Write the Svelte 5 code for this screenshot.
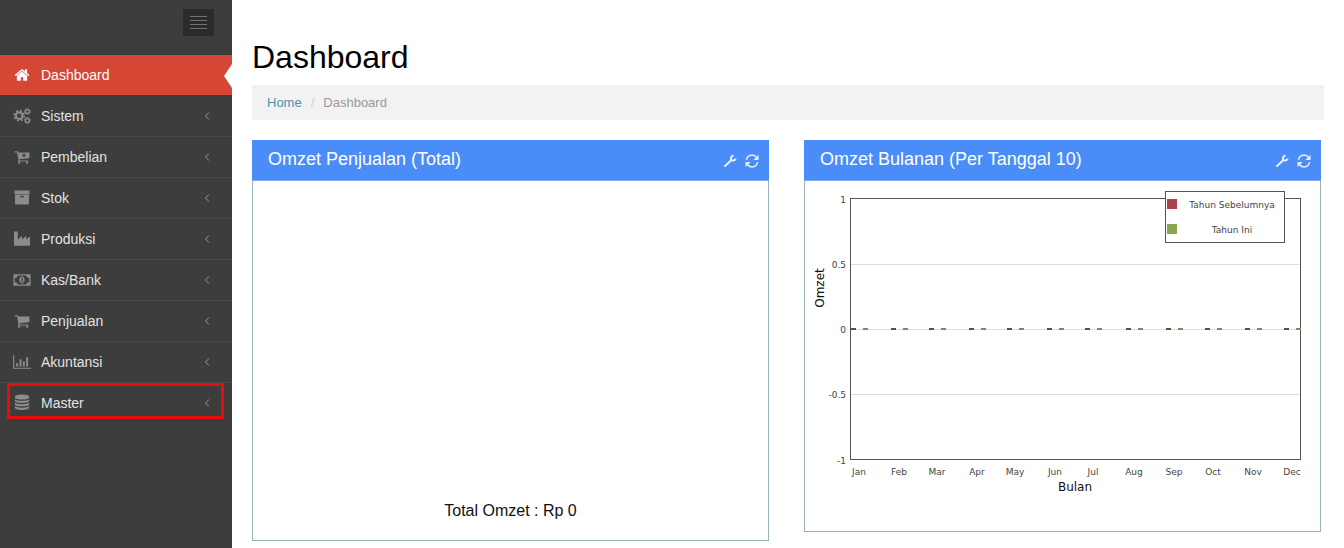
<script lang="ts">
  type MenuItem = { label: string; icon: string; active?: boolean; marked?: boolean };

  const menu: MenuItem[] = [
    { label: 'Dashboard', icon: 'home', active: true },
    { label: 'Sistem', icon: 'cogs' },
    { label: 'Pembelian', icon: 'cart-plus' },
    { label: 'Stok', icon: 'archive' },
    { label: 'Produksi', icon: 'industry' },
    { label: 'Kas/Bank', icon: 'money' },
    { label: 'Penjualan', icon: 'cart' },
    { label: 'Akuntansi', icon: 'chart' },
    { label: 'Master', icon: 'database', marked: true },
  ];

  // x positions follow the first day of each month
  const months = [
    { name: 'Jan', x: 54 },
    { name: 'Feb', x: 94 },
    { name: 'Mar', x: 132 },
    { name: 'Apr', x: 172 },
    { name: 'May', x: 210 },
    { name: 'Jun', x: 250 },
    { name: 'Jul', x: 288 },
    { name: 'Aug', x: 329 },
    { name: 'Sep', x: 369 },
    { name: 'Oct', x: 408 },
    { name: 'Nov', x: 448 },
    { name: 'Dec', x: 487 },
  ];

  const ticks = [
    { label: '1', y: 18 },
    { label: '0.5', y: 83 },
    { label: '0', y: 148 },
    { label: '-0.5', y: 213 },
    { label: '-1', y: 279 },
  ];

  let collapsed = false;
</script>

{#snippet menuIcon(name: string)}
  <svg class="menu-icon" viewBox="0 0 1792 1792" aria-hidden="true">
    {#if name === 'home'}
      <path d="M1472 992v480q0 26-19 45t-45 19h-384v-384h-256v384h-384q-26 0-45-19t-19-45v-480q0-1 .5-3t.5-3l575-474 575 474q1 2 1 6zm223-69l-62 74q-8 9-21 11h-3q-13 0-21-7l-692-577-692 577q-12 8-24 7-13-2-21-11l-62-74q-8-10-7-23.5t11-21.5l719-599q32-26 76-26t76 26l244 204v-195q0-14 9-23t23-9h192q14 0 23 9t9 23v408l219 182q10 8 11 21.5t-7 23.5z" />
    {:else if name === 'cogs'}
      <g fill="none" stroke="currentColor">
        <circle cx="580" cy="860" r="370" stroke-width="240" />
        <circle cx="580" cy="860" r="560" stroke-width="190" stroke-dasharray="220 220" />
        <circle cx="1500" cy="400" r="220" stroke-width="160" />
        <circle cx="1500" cy="400" r="330" stroke-width="110" stroke-dasharray="130 130" />
        <circle cx="1500" cy="1390" r="220" stroke-width="160" />
        <circle cx="1500" cy="1390" r="330" stroke-width="110" stroke-dasharray="130 130" />
      </g>
    {:else if name === 'cart' || name === 'cart-plus'}
      <path d="M704 1536q0 52-38 90t-90 38-90-38-38-90 38-90 90-38 90 38 38 90zm896 0q0 52-38 90t-90 38-90-38-38-90 38-90 90-38 90 38 38 90zm128-1088v512q0 24-16.500 42.500t-40.500 21.500l-1044 122q13 60 13 70 0 16-24 64h920q26 0 45 19t19 45-19 45-45 19h-1024q-26 0-45-19t-19-45q0-11 8-31.500t16-36 21.500-40 15.500-29.500l-177-823h-204q-26 0-45-19t-19-45 19-45 45-19h256q16 0 28.500 6.500t19.500 15.500 13 24.500 8 26 5.500 29.500 4.500 26h1201q26 0 45 19t19 45z" />
      {#if name === 'cart-plus'}
        <path d="M1120 480v440M900 700h440" stroke="#3d3d3d" stroke-width="130" />
      {/if}
    {:else if name === 'archive'}
      <path d="M60 60h1672v440h-1672zM120 550h1552v1080h-1552zM680 680v120h432v-120z" fill-rule="evenodd" />
    {:else if name === 'industry'}
      <path d="M0 1664v-1620h420v900l480-420v420l480-420v420l412-360v1080z" />
    {:else if name === 'money'}
      <path d="M-60 256h1912v1280h-1912zM400 390q0 270-320 270v480q320 0 320 270h992q0-270 320-270v-480q-320 0-320-270z" fill-rule="evenodd" />
      <path d="M896 500c-180 0-290 180-290 396s110 396 290 396 290-180 290-396-110-396-290-396zm-110 220l110-80h80v430h90v90h-290v-90h90v-290l-80 40z" fill-rule="evenodd" />
    {:else if name === 'chart'}
      <path d="M-100 128h128v1408h1900v128h-2028zM250 1000h220v408h-220zM620 600h220v808h-220zM990 800h220v608h-220zM1360 350h220v1058h-220z" />
    {:else if name === 'database'}
      <path d="M896 -60q420 0 640 96t168 160v90q0 90-210 160t-598 70-598-70-210-160v-90q0-90 210-173t598-83z" />
      <path d="M88 470q230 186 808 186t808-186v180q0 100-210 170t-598 70-598-70-210-170zM88 850q230 186 808 186t808-186v180q0 100-210 170t-598 70-598-70-210-170zM88 1230q230 186 808 186t808-186v180q0 110-210 190t-598 80-598-80-210-190z" />
    {/if}
  </svg>
{/snippet}

{#snippet panelTools()}
  <div class="tools">
    <button class="tool" aria-label="Pengaturan">
      <svg viewBox="0 0 14 14">
        <path d="M2 12l6-5.500" stroke-width="2" stroke-linecap="round" />
        <path d="M10.500 1.500C8.500 2 7.500 3.500 8 5.500c.5 1.500 3 1.500 5-.5" stroke-width="2" />
      </svg>
    </button>
    <button class="tool" aria-label="Muat ulang">
      <svg viewBox="0 0 14 14">
        <path d="M1.500 6A5.500 5.500 0 0 1 11.500 3.500M12.500 8A5.500 5.500 0 0 1 2.500 10.500" stroke-width="1.500" />
        <path d="M13.500 1v5h-5zM.5 13V8h5z" class="heads" />
      </svg>
    </button>
  </div>
{/snippet}

<div class="page">
  <aside class="sidebar">
    <div class="sidebar-top">
      <button class="toggler" aria-label="Menu" on:click={() => (collapsed = !collapsed)}>
        <svg width="17" height="14" viewBox="0 0 17 14">
          <path d="M0 .5h17M0 4.500h17M0 8.500h17M0 12.500h17" stroke="#737373" />
        </svg>
      </button>
    </div>
    <nav class:collapsed>
      <ul class="menu">
        {#each menu as item}
          <li class:active={item.active} class:marked={item.marked}>
            <a href="#{item.icon}">
              {@render menuIcon(item.icon)}
              <span class="menu-label">{item.label}</span>
              {#if !item.active}
                <svg class="arrow" width="6" height="8" viewBox="0 0 6 8">
                  <path d="M5 .5L1.500 4 5 7.500" fill="none" stroke="currentColor" />
                </svg>
              {/if}
            </a>
          </li>
        {/each}
      </ul>
    </nav>
  </aside>

  <main class="content">
    <h1>Dashboard</h1>
    <ol class="breadcrumb">
      <li><a href="#home">Home</a></li>
      <li class="sep" aria-hidden="true">/</li>
      <li>Dashboard</li>
    </ol>

    <div class="panels">
      <section class="panel">
        <header>
          <h2>Omzet Penjualan (Total)</h2>
          {@render panelTools()}
        </header>
        <div class="total">Total Omzet : Rp 0</div>
      </section>

      <section class="panel">
        <header>
          <h2>Omzet Bulanan (Per Tanggal 10)</h2>
          {@render panelTools()}
        </header>
        <svg class="chart" viewBox="0 0 515 350" role="img" aria-label="Omzet Bulanan">
          {#each ticks as tick, i}
            {#if i > 0 && i < ticks.length - 1}
              <line x1="46" x2="495" y1={tick.y + 0.5} y2={tick.y + 0.5} stroke="#ddd" />
            {/if}
            <text class="tick" x="41" y={tick.y + 4} text-anchor="end">{tick.label}</text>
          {/each}
          <rect x="45.500" y="17.500" width="450" height="261" fill="none" stroke="#545454" />

          {#each months as month}
            <rect x={month.x - 8} y="147" width="5" height="2" fill="#5c4f48" />
            <rect x={month.x + 4} y="147" width="5" height="2" fill="#7d8764" />
            <text class="tick" x={month.x} y="294" text-anchor="middle">{month.name}</text>
          {/each}

          <text class="axis" x="270" y="310" text-anchor="middle">Bulan</text>
          <text class="axis" transform="translate(19 107) rotate(-90)" text-anchor="middle">Omzet</text>

          <!-- Legend -->
          <rect x="360.500" y="10.500" width="119" height="51" fill="#fff" stroke="#545454" />
          <rect x="362" y="18" width="10" height="10" fill="#a8444b" />
          <rect x="362" y="43" width="10" height="10" fill="#8aa651" />
          <text class="tick" x="427" y="27" text-anchor="middle">Tahun Sebelumnya</text>
          <text class="tick" x="427" y="52" text-anchor="middle">Tahun Ini</text>
        </svg>
      </section>
    </div>
  </main>
</div>

<style>
  :global(body) {
    margin: 0;
    background: #fff;
    font-family: 'Liberation Sans', Arial, sans-serif;
  }
  .page {
    display: flex;
    min-height: 100vh;
  }
  button {
    border: 0;
    padding: 0;
    cursor: pointer;
  }

  /* Sidebar */
  .sidebar {
    width: 232px;
    flex-shrink: 0;
    background: #3d3d3d;
  }
  .sidebar-top {
    display: flex;
    justify-content: flex-end;
    align-items: flex-start;
    height: 46px;
    padding: 9px 18px 0 0;
  }
  .toggler {
    display: flex;
    align-items: center;
    justify-content: center;
    width: 31px;
    height: 27px;
    background: #2b2b2b;
  }
  .collapsed {
    display: none;
  }
  .menu {
    list-style: none;
    margin: 0;
    padding: 0;
  }
  .menu li {
    position: relative;
    border-bottom: 1px solid #494949;
  }
  .menu a {
    display: flex;
    align-items: center;
    height: 40px;
    box-sizing: border-box;
    padding: 0 22px 0 14px;
    color: #e2e2e2;
    font-size: 14px;
    text-decoration: none;
  }
  .menu-icon {
    width: 16px;
    height: 16px;
    margin-right: 11px;
    color: #8c8c8c;
    fill: currentColor;
    overflow: visible;
  }
  .menu-label {
    flex: 1;
  }
  .arrow {
    color: #999;
  }
  .menu .active {
    background: #d64635;
    border-color: #3d3d3d;
    background-clip: padding-box;
  }
  .active a {
    color: #fff;
  }
  .active .menu-icon {
    color: #fff;
  }
  /* notch pointing at the open page */
  .active::after {
    content: '';
    position: absolute;
    top: 9px;
    right: 0;
    border: 12px solid transparent;
    border-left-width: 0;
    border-right: 8px solid #fff;
  }
  .menu .marked {
    border-bottom: 0;
  }
  .marked::after {
    content: '';
    position: absolute;
    inset: 0 8px 4px 7px;
    border: 3px solid #e80c0c;
    pointer-events: none;
  }

  /* Content */
  .content {
    flex: 1;
    min-width: 0;
    padding: 37px 20px 7px;
  }
  h1 {
    margin: 0 0 8px;
    font-size: 32px;
    font-weight: 400;
    line-height: 40px;
    color: #000;
  }
  .breadcrumb {
    display: flex;
    gap: 9px;
    margin: 0 0 20px;
    padding: 1px 15px 0;
    list-style: none;
    background: #f2f2f2;
    color: #999;
    font-size: 13px;
    line-height: 34px;
  }
  .breadcrumb a {
    color: #4795ab;
    text-decoration: none;
  }
  .sep {
    color: #ccc;
  }
  .panels {
    display: grid;
    grid-template-columns: 1fr 1fr;
    gap: 35px;
    align-items: start;
    margin-right: 3px;
  }
  .panel {
    border: 1px solid #9ab3b8;
    border-top: 0;
  }
  .panel header {
    display: flex;
    justify-content: space-between;
    align-items: center;
    height: 40px;
    margin: 0 -1px;
    padding: 0 10px 0 16px;
    background: #4b8df8;
    border-bottom: 1px solid #7fa9ee;
    box-sizing: content-box;
  }
  h2 {
    margin: 0 0 2px;
    font-size: 18px;
    font-weight: 400;
    color: #fff;
  }
  .tools {
    display: flex;
    gap: 8px;
    margin-top: 2px;
  }
  .tool {
    display: flex;
    background: none;
  }
  .tool svg {
    width: 14px;
    height: 14px;
    fill: none;
    stroke: #e8f1ff;
  }
  .tool .heads {
    fill: #e8f1ff;
    stroke: none;
  }
  .total {
    display: flex;
    align-items: flex-end;
    justify-content: center;
    min-height: 340px;
    padding-bottom: 19px;
    color: #111;
    font-size: 16px;
    line-height: 20px;
  }
  .chart {
    display: block;
    width: 100%;
  }
  .tick {
    font-family: 'DejaVu Sans', Verdana, sans-serif;
    font-size: 9px;
    fill: #444;
  }
  .axis {
    font-family: 'DejaVu Sans', Verdana, sans-serif;
    font-size: 12px;
    fill: #111;
  }
</style>
